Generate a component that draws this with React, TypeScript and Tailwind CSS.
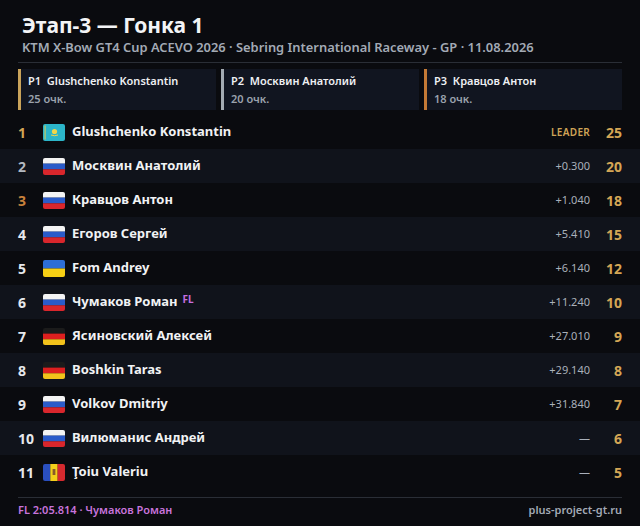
import React from "react";

type Flag = "kz" | "ru" | "ua" | "de" | "md";

function FlagIcon({ c }: { c: Flag }) {
  const common = { width: 22, height: 17, viewBox: "0 0 22 17" };
  let body: React.ReactNode = null;
  if (c === "ru") {
    body = (
      <>
        <rect x="0" y="0" width="22" height="5.7" fill="#f4f4f4" />
        <rect x="0" y="5.6" width="22" height="5.8" fill="#2a5bc9" />
        <rect x="0" y="11.3" width="22" height="5.7" fill="#d9262c" />
      </>
    );
  } else if (c === "de") {
    body = (
      <>
        <rect x="0" y="0" width="22" height="5.7" fill="#1b1b1b" />
        <rect x="0" y="5.6" width="22" height="5.8" fill="#dd1f1f" />
        <rect x="0" y="11.3" width="22" height="5.7" fill="#f2c21b" />
      </>
    );
  } else if (c === "ua") {
    body = (
      <>
        <rect x="0" y="0" width="22" height="8.5" fill="#2d6ed6" />
        <rect x="0" y="8.5" width="22" height="8.5" fill="#f6cf14" />
      </>
    );
  } else if (c === "kz") {
    body = (
      <>
        <rect x="0" y="0" width="22" height="17" fill="#2cb5c9" />
        <rect x="1.5" y="1.5" width="1.2" height="14" fill="#e9cf4a" opacity="0.8" />
        <circle cx="11.5" cy="7.5" r="2.6" fill="#f1d64a" />
        <path d="M8 11 Q11.5 12.5 15 11" stroke="#f1d64a" strokeWidth="1" fill="none" />
      </>
    );
  } else if (c === "md") {
    body = (
      <>
        <rect x="0" y="0" width="7.4" height="17" fill="#2a4fbf" />
        <rect x="7.3" y="0" width="7.4" height="17" fill="#f4cf1a" />
        <rect x="14.6" y="0" width="7.4" height="17" fill="#d62a2f" />
        <rect x="9.6" y="5" width="2.8" height="6" fill="#8a5a2a" />
      </>
    );
  }
  return (
    <svg {...common} className="shrink-0 rounded-[2px]">
      <g>{body}</g>
    </svg>
  );
}

type Row = {
  pos: number;
  flag: Flag;
  name: string;
  gap: string;
  pts: number;
  fl?: boolean;
};

const rows: Row[] = [
  { pos: 1, flag: "kz", name: "Glushchenko Konstantin", gap: "LEADER", pts: 25 },
  { pos: 2, flag: "ru", name: "Москвин Анатолий", gap: "+0.300", pts: 20 },
  { pos: 3, flag: "ru", name: "Кравцов Антон", gap: "+1.040", pts: 18 },
  { pos: 4, flag: "ru", name: "Егоров Сергей", gap: "+5.410", pts: 15 },
  { pos: 5, flag: "ua", name: "Fom Andrey", gap: "+6.140", pts: 12 },
  { pos: 6, flag: "ru", name: "Чумаков Роман", gap: "+11.240", pts: 10, fl: true },
  { pos: 7, flag: "de", name: "Ясиновский Алексей", gap: "+27.010", pts: 9 },
  { pos: 8, flag: "de", name: "Boshkin Taras", gap: "+29.140", pts: 8 },
  { pos: 9, flag: "ru", name: "Volkov Dmitriy", gap: "+31.840", pts: 7 },
  { pos: 10, flag: "ru", name: "Вилюманис Андрей", gap: "—", pts: 6 },
  { pos: 11, flag: "md", name: "Ţoiu Valeriu", gap: "—", pts: 5 },
];

const posColor = (p: number) =>
  p === 1
    ? "text-[#d2a757]"
    : p === 2
    ? "text-[#b3b9c1]"
    : p === 3
    ? "text-[#c8823c]"
    : "text-[#e6e8ec]";

export default function App() {
  return (
    <div
      className="w-[640px] h-[526px] bg-[#0a0b0f] text-white overflow-hidden flex flex-col"
      style={{ fontFamily: '"Noto Sans", "Open Sans", sans-serif' }}
    >
      <div className="px-[18px] pt-[12px]">
        <div className="px-[4px]">
          <div className="text-[21px] font-bold leading-[27px] text-[#f3f4f6]">Этап-3 — Гонка 1</div>
          <div className="text-[12.9px] font-semibold leading-[17px] text-[#a3aab5]">
            KTM X-Bow GT4 Cup ACEVO 2026 · Sebring International Raceway - GP · 11.08.2026
          </div>
        </div>
        <div className="mt-[6px] h-px bg-[#2a2e36]" />
        <div className="mt-[6px] grid grid-cols-3 gap-[5px]">
          {[
            { p: "P1", n: "Glushchenko Konstantin", pts: "25 очк.", c: "border-[#c9a35a]" },
            { p: "P2", n: "Москвин Анатолий", pts: "20 очк.", c: "border-[#a4abb3]" },
            { p: "P3", n: "Кравцов Антон", pts: "18 очк.", c: "border-[#c47a36]" },
          ].map((x) => (
            <div key={x.p} className={`h-[41px] bg-[#111520] border-l-[3px] ${x.c} pl-[7px] pt-[4px]`}>
              <div className="text-[11px] font-semibold leading-[16px] text-[#eef0f3]">
                {x.p}&nbsp;&nbsp;{x.n}
              </div>
              <div className="text-[11px] font-semibold leading-[16px] mt-[2px] text-[#9ba2ad]">{x.pts}</div>
            </div>
          ))}
        </div>
      </div>
      <div className="mt-[5px] flex flex-col">
        {rows.map((r) => (
          <div
            key={r.pos}
            className={`h-[34px] flex items-center px-[18px] ${r.pos % 2 === 0 ? "bg-[#10131b]" : "bg-[#0a0b0f]"}`}
          >
            <div className={`w-[25px] text-[14px] font-bold ${posColor(r.pos)}`}>{r.pos}</div>
            <FlagIcon c={r.flag} />
            <div className="ml-[7px] flex-1 flex items-start text-[13px] font-bold text-[#f1f2f4]">
              {r.name}
              {r.fl && (
                <span className="ml-[5px] mt-[1px] text-[10px] font-bold text-[#c66fe0] leading-[12px]">FL</span>
              )}
            </div>
            <div
              className={
                r.gap === "LEADER"
                  ? "text-[10px] font-semibold tracking-[0.3px] text-[#cfa457]"
                  : "text-[11px] text-[#a9b0ba]"
              }
            >
              {r.gap}
            </div>
            <div className="w-[32px] text-right text-[14px] font-bold text-[#d4a655]">{r.pts}</div>
          </div>
        ))}
      </div>
      <div className="px-[18px] mt-[8px]">
        <div className="h-px bg-[#2a2e36]" />
        <div className="flex justify-between items-center h-[24px] text-[11px] font-semibold">
          <span className="text-[#c874dc]">FL 2:05.814 · Чумаков Роман</span>
          <span className="text-[#a3aab5]">plus-project-gt.ru</span>
        </div>
      </div>
    </div>
  );
}
